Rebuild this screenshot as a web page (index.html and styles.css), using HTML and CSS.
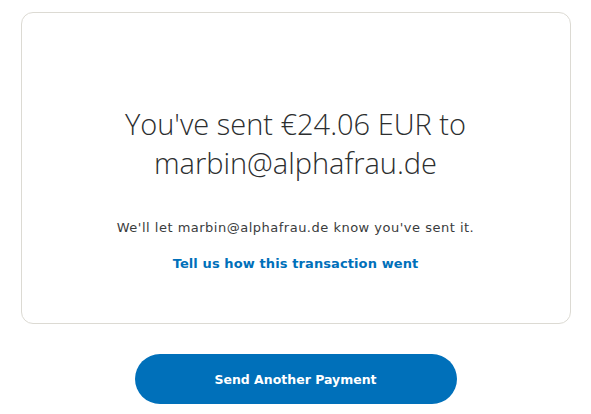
FILE: index.html
```html
<!DOCTYPE html>
<html lang="en">
<head>
<meta charset="utf-8">
<title>Payment sent</title>
<link rel="stylesheet" href="styles.css">
</head>
<body>
<main class="page">
  <section class="card">
    <h1 class="title">You've sent €24.06 EUR to<br>marbin@alphafrau.de</h1>
    <p class="note">We'll let marbin@alphafrau.de know you've sent it.</p>
    <a class="feedback" href="#">Tell us how this transaction went</a>
  </section>
  <button class="primary" type="button">Send Another Payment</button>
</main>
</body>
</html>
```
FILE: styles.css
```css
html, body {
  margin: 0;
  padding: 0;
  background: #ffffff;
}
.page {
  display: flex;
  flex-direction: column;
  align-items: center;
  padding-top: 12px;
  font-family: "DejaVu Sans", "Liberation Sans", sans-serif;
  color: #2c2e2f;
}
.card {
  box-sizing: border-box;
  width: 550px;
  height: 312px;
  border: 1px solid #dcdad3;
  border-radius: 12px;
  padding: 91px 20px 0;
  display: flex;
  flex-direction: column;
  align-items: center;
  text-align: center;
}
.title {
  margin: 0;
  font-family: "Open Sans", sans-serif;
  font-weight: 300;
  font-size: 29px;
  line-height: 39px;
  color: #2c2e2f;
}
.note {
  margin: 36px 0 0;
  font-size: 13px;
  line-height: 20px;
  letter-spacing: 0.5px;
  color: #3a3c3d;
}
.feedback {
  margin-top: 16px;
  font-size: 13px;
  line-height: 20px;
  font-weight: bold;
  letter-spacing: 0.1px;
  color: #0070ba;
  text-decoration: none;
}
.primary {
  margin-top: 30px;
  width: 322px;
  height: 50px;
  border: none;
  border-radius: 25px;
  background: #0070ba;
  color: #ffffff;
  font-family: "DejaVu Sans", "Liberation Sans", sans-serif;
  font-weight: bold;
  font-size: 12.5px;
}
```
